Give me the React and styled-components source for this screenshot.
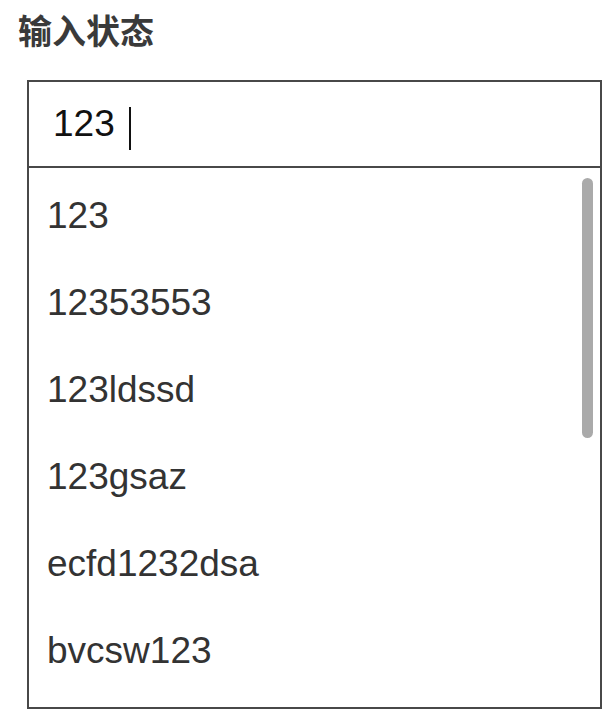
import React from "react";
import styled, { createGlobalStyle } from "styled-components";

const Global = createGlobalStyle`
  html, body { margin: 0; padding: 0; background: #fff; }
  body { font-family: "Liberation Sans", Arial, "Noto Sans CJK SC", sans-serif; }
`;

const Page = styled.div`
  display: flex;
  flex-direction: column;
  align-items: flex-start;
  padding: 10px 0 0 18px;
`;

const Title = styled.h1`
  margin: 0;
  font-family: "Noto Sans CJK SC", "Noto Sans", sans-serif;
  font-size: 34px;
  font-weight: 600;
  line-height: 40px;
  color: #3a3a3a;
`;

const Box = styled.div`
  margin: 30px 0 0 9px;
  width: 575px;
  box-sizing: border-box;
  border: 2px solid #484848;
  display: flex;
  flex-direction: column;
`;

const InputRow = styled.div`
  height: 84px;
  border-bottom: 2px solid #484848;
  display: flex;
  align-items: center;
  padding-left: 24px;
  font-size: 37px;
  color: #111;
`;

const Caret = styled.span`
  display: inline-block;
  width: 2px;
  height: 43px;
  background: #111;
  margin: 9px 0 0 14px;
`;

const List = styled.div`
  position: relative;
  height: 539px;
  overflow: hidden;
  padding-top: 4px;
  box-sizing: border-box;
`;

const Item = styled.div`
  height: 87px;
  display: flex;
  align-items: center;
  padding-left: 18px;
  font-size: 37px;
  color: #333;
`;

const Thumb = styled.div`
  position: absolute;
  top: 10px;
  right: 7px;
  width: 11px;
  height: 260px;
  border-radius: 6px;
  background: #aaaaaa;
`;

const items = ["123", "12353553", "123ldssd", "123gsaz", "ecfd1232dsa", "bvcsw123"];

export default function App() {
  return (
    <>
      <Global />
      <Page>
        <Title>输入状态</Title>
        <Box>
          <InputRow>
            <span>123</span>
            <Caret />
          </InputRow>
          <List>
            {items.map((t) => (
              <Item key={t}>{t}</Item>
            ))}
            <Thumb />
          </List>
        </Box>
      </Page>
    </>
  );
}
